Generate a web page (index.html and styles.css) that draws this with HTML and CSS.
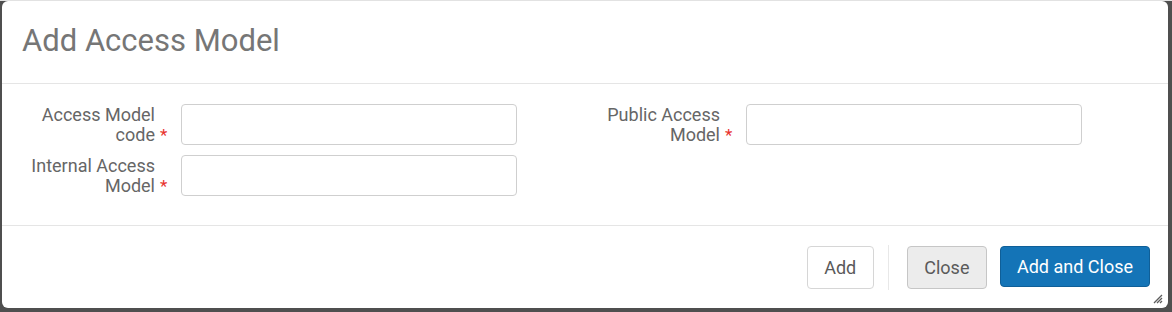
FILE: index.html
```html
<!DOCTYPE html>
<html lang="en">

<head>
    <meta charset="UTF-8">
    <meta name="viewport" content="width=device-width, initial-scale=1.0">
    <title>Add Access Model</title>
    <link rel="stylesheet" href="styles.css">
</head>

<body>

    <div class="backdrop">
        <div class="modal">
            <div class="modal-header">
                <h2>Add Access Model</h2>
            </div>

            <div class="modal-body">
                <div class="form-grid">
                    <div class="field">
                        <label for="model-code"><span class="label-text">Access Model code</span><span class="required">*</span></label>
                        <input type="text" id="model-code">
                    </div>
                    <div class="field">
                        <label for="public-model"><span class="label-text">Public Access Model</span><span class="required">*</span></label>
                        <input type="text" id="public-model">
                    </div>
                    <div class="field">
                        <label for="internal-model"><span class="label-text">Internal Access Model</span><span class="required">*</span></label>
                        <input type="text" id="internal-model">
                    </div>
                </div>
            </div>

            <div class="modal-footer">
                <button class="btn">Add</button>
                <span class="btn-divider"></span>
                <button class="btn btn-muted">Close</button>
                <button class="btn btn-primary">Add and Close</button>
            </div>

            <!-- resize handle -->
            <svg class="resize-grip" width="10" height="10" viewBox="0 0 10 10">
                <path d="M9 1 L1 9 M9 4 L4 9 M9 7 L7 9" stroke="#5c5c5c" stroke-width="1.3" fill="none"/>
            </svg>
        </div>
    </div>

</body>

</html>
```

FILE: styles.css
```css
/* Basic styling */
* {
    box-sizing: border-box;
}

body {
    margin: 0;
    font-family: Roboto, "Liberation Sans", Arial, sans-serif;
    background-color: #4f4f4f;
}

.backdrop {
    height: 312px;
    padding: 0 4px 4px 2px;
    border-top: 1px solid #e2e2e2;
}

.modal {
    position: relative;
    height: 307px;
    background-color: white;
    border-radius: 6px;
    display: flex;
    flex-direction: column;
}

/* Header */
.modal-header {
    height: 83px;
    padding: 22px 20px 0;
    border-bottom: 1px solid #e5e5e5;
}

.modal-header h2 {
    margin: 0;
    font-size: 31px;
    line-height: 36px;
    font-weight: normal;
    color: #767676;
}

/* Body */
.modal-body {
    padding: 20px 0 29px 14px;
    border-bottom: 1px solid #e5e5e5;
}

.form-grid {
    display: grid;
    grid-template-columns: 565px 565px;
    row-gap: 10px;
}

.field {
    display: grid;
    grid-template-columns: 152px 336px;
    column-gap: 13px;
    align-items: center;
}

.field label {
    display: flex;
    justify-content: flex-end;
    align-items: flex-end;
    font-size: 18px;
    line-height: 20px;
    color: #666;
}

.label-text {
    max-width: 130px;
    text-align: right;
}

.required {
    width: 8px;
    margin-left: 5px;
    color: #e8322e;
    font-size: 17px;
}

.field input {
    height: 41px;
    width: 336px;
    border: 1px solid #cfcfcf;
    border-radius: 4px;
    padding: 0 10px;
    font: inherit;
}

/* Footer */
.modal-footer {
    flex: 1;
    display: flex;
    justify-content: flex-end;
    align-items: flex-start;
    padding: 20px 18px 0 0;
}

.btn {
    height: 43px;
    padding: 0 16.5px;
    font-family: inherit;
    font-size: 18px;
    color: #5a5a5a;
    background-color: white;
    border: 1px solid #d6d6d6;
    border-radius: 4px;
}

.btn-divider {
    width: 1px;
    height: 45px;
    margin: -1px 18px 0 14px;
    background-color: #e8e8e8;
}

.btn-muted {
    background-color: #ececec;
    border-color: #c6c6c6;
}

.btn-primary {
    margin-left: 13px;
    height: 41px;
    padding: 0 16px;
    color: white;
    background-color: #1474b7;
    border-color: #0f5f98;
}

.resize-grip {
    position: absolute;
    right: 5px;
    bottom: 4px;
}
```
